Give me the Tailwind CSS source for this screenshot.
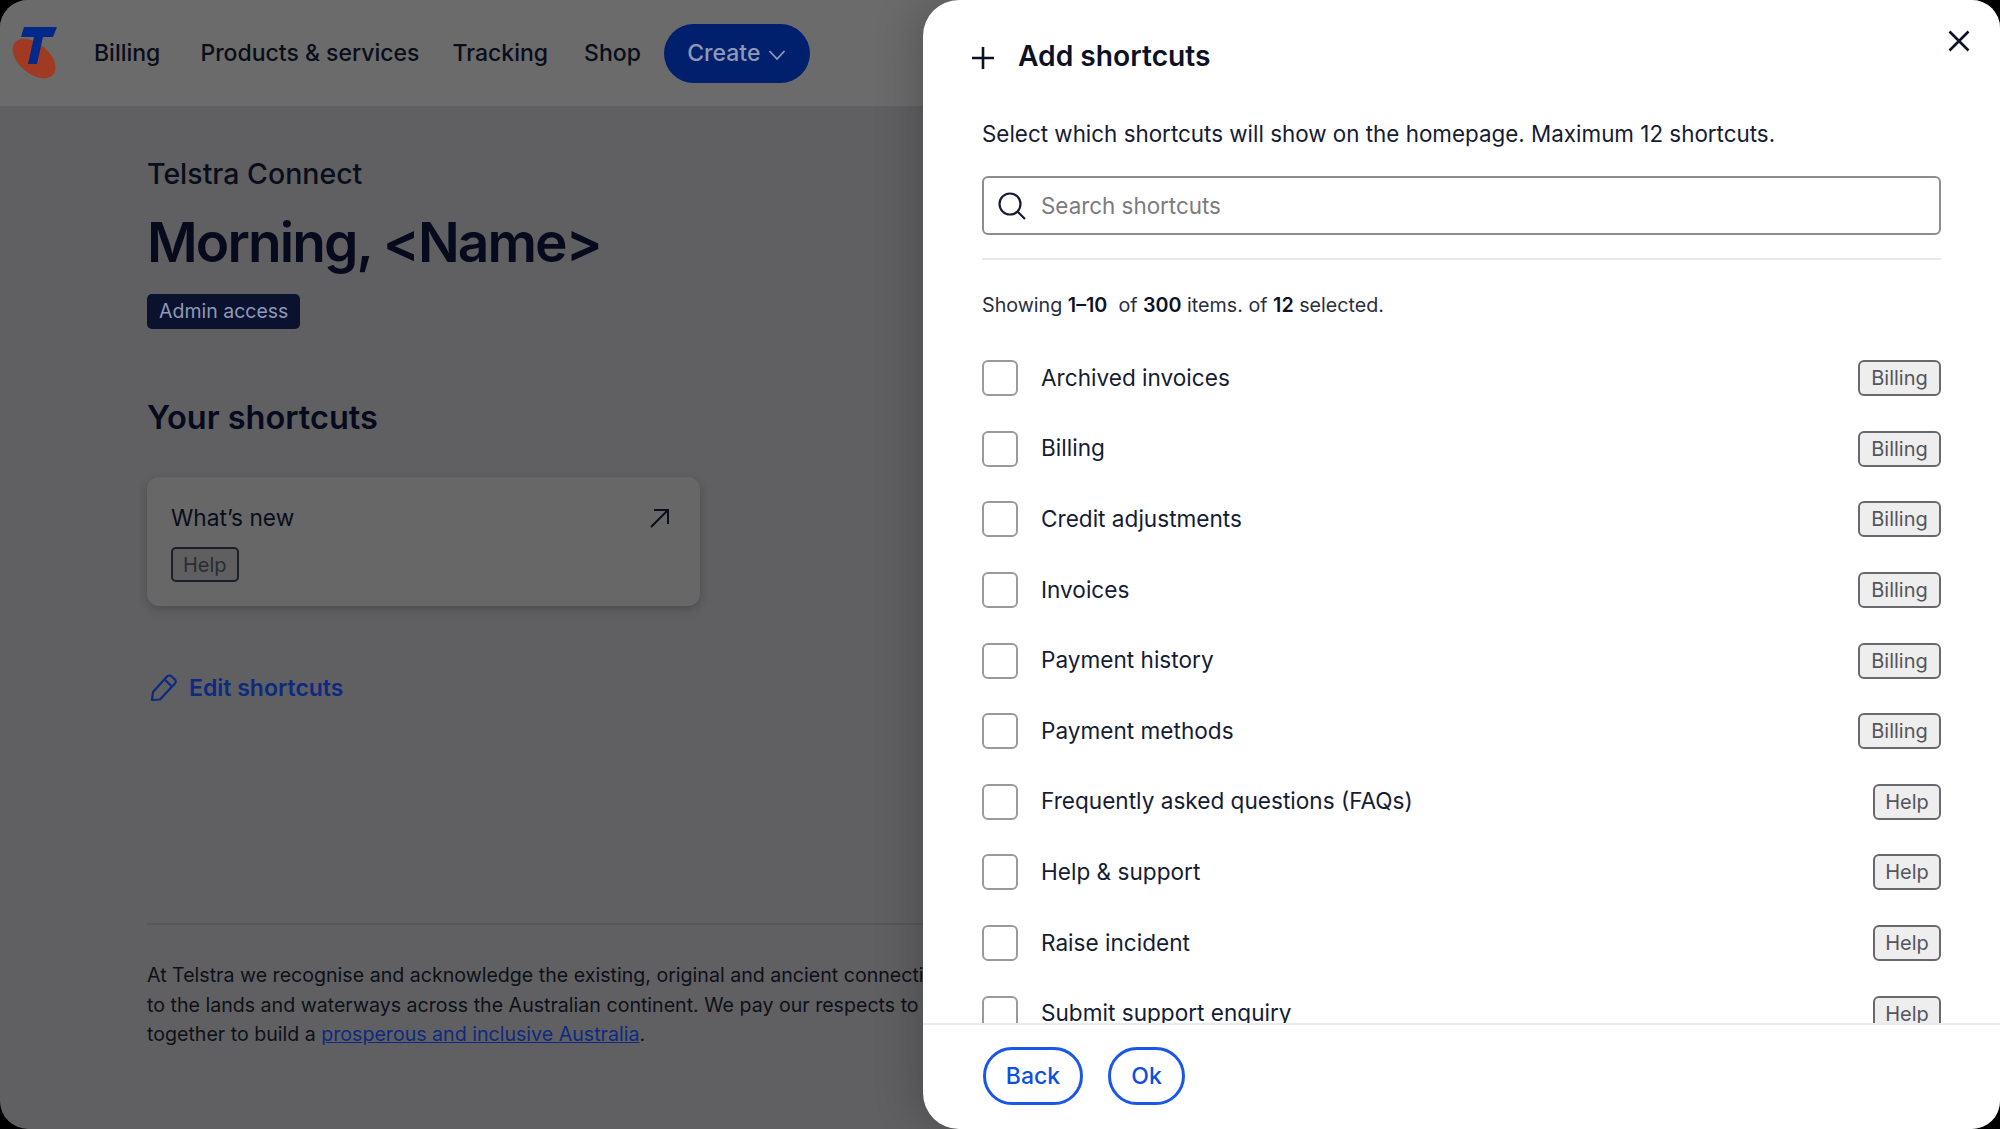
<!DOCTYPE html>
<html lang="en">
<head>
  <meta charset="UTF-8" />
  <title>Telstra Connect</title>
  <script src="https://cdn.jsdelivr.net/npm/@tailwindcss/browser@4"></script>
</head>
<body class="bg-black font-['Inter',sans-serif] text-[#0c1226]">
  <div class="relative w-[2000px] h-[1129px] rounded-[28px] overflow-hidden bg-[#606062]">

    <!-- Nav -->
    <header class="h-[106px] bg-[#6b6b6b] flex items-center pl-[12px]">
      <svg class="w-[46px] h-[54px] shrink-0" viewBox="12 26 46 54">
        <ellipse cx="34" cy="58.500" rx="25" ry="15" transform="rotate(40 34 58.500)" fill="#a03a22" />
        <polygon points="24,27 57,27 53,37 43,37 37,64 28,64 34,37 21,37" fill="#00298a" />
      </svg>
      <nav class="flex items-center ml-[36px] text-[23px] font-medium text-[#0a0d1a]">
        <a class="mr-[40px]">Billing</a>
        <a class="mr-[33px]">Products &amp; services</a>
        <a class="mr-[36px]">Tracking</a>
        <a class="mr-[23px]">Shop</a>
        <a class="w-[146px] h-[59px] rounded-full bg-[#00206e] text-[#8f99b5] flex items-center justify-center gap-[8px]">
          Create
          <svg class="w-[18px] h-[18px] mt-[3px]" viewBox="0 0 18 18" fill="none" stroke="#8f99b5" stroke-width="1.8"><path d="M1.500 5l7.500 8 7.500-8" /></svg>
        </a>
      </nav>
    </header>

    <!-- Page -->
    <main class="pl-[147px]">
      <p class="mt-[50px] text-[28.500px] leading-[36px] font-medium text-[#0a0d1a]">Telstra Connect</p>
      <h1 class="mt-[15px] text-[55px] leading-[70px] font-semibold tracking-[-1.900px] text-[#060a1c]">Morning, &lt;Name&gt;</h1>
      <span class="mt-[17px] inline-flex items-center h-[35px] px-[12px] rounded-[5px] bg-[#0a1230] text-[19.500px] text-[#8f99b5]">Admin access</span>

      <h2 class="mt-[67px] text-[32.500px] leading-[44px] font-semibold text-[#060a1c]">Your shortcuts</h2>

      <div class="mt-[37px] w-[553px] h-[129px] rounded-[12px] bg-[#676767] shadow-[0_3px_10px_rgba(0,0,0,0.22)] px-[24px] pt-[24px]">
        <div class="flex items-center justify-between pr-[6px]">
          <span class="text-[22.700px] leading-[34px] text-[#0a0d1a]">What’s new</span>
          <svg class="w-[22px] h-[22px]" viewBox="0 0 22 22" fill="none" stroke="#0a0d1a" stroke-width="2"><path d="M3 20L20 3M6 3h14v14" /></svg>
        </div>
        <span class="mt-[12px] inline-flex items-center h-[35px] px-[10px] rounded-[5px] border-2 border-[#1c1f2a] bg-[#5f5f5f] text-[20px] text-[#2a2c33]">Help</span>
      </div>

      <a class="mt-[64px] flex items-center gap-[10px] h-[36px] text-[23px] font-semibold text-[#0d2a80]">
        <svg class="w-[30px] h-[30px] ml-[2px]" viewBox="0 0 30 30" fill="none" stroke="#0d2a80" stroke-width="2.200" stroke-linejoin="round"><path d="M3 27l1-8L18 3.500a3 3 0 0 1 4.300-.2l3.400 3a3 3 0 0 1 .2 4.300L11 26.500zM15.500 6.500l8 7.500" /></svg>
        Edit shortcuts
      </a>

      <div class="mt-[217px] border-t-2 border-[#575759]"></div>
      <p class="mt-[36px] whitespace-nowrap text-[19.600px] leading-[29.500px] text-[#0e1018]">
        At Telstra we recognise and acknowledge the existing, original and ancient connections of First Nations peoples<br />
        to the lands and waterways across the Australian continent. We pay our respects to Elders past and present<br />
        together to build a <a class="text-[#0d2a80] underline">prosperous and inclusive Australia</a>.
      </p>
    </main>

    <!-- Add shortcuts panel -->
    <aside class="absolute inset-y-0 right-0 w-[1077px] flex flex-col bg-white rounded-l-[36px] shadow-[-10px_0_40px_rgba(0,0,0,0.18)]">
      <button class="absolute top-[30px] right-[30px]">
        <svg class="w-[22px] h-[22px]" viewBox="0 0 22 22" fill="none" stroke="#0c1226" stroke-width="2.600"><path d="M1.500 1.500l19 19M20.500 1.500l-19 19" /></svg>
      </button>

      <div class="px-[59px] shrink-0">
        <div class="flex items-center h-[112px] -ml-[10px]">
          <svg class="w-[22px] h-[22px] mt-[4px]" viewBox="0 0 22 22" fill="none" stroke="#0c1226" stroke-width="2.600"><path d="M11 0v22M0 11h22" /></svg>
          <h2 class="ml-[24px] text-[28.200px] font-semibold text-[#0c1226]">Add shortcuts</h2>
        </div>
        <p class="mt-[5px] text-[22.400px] leading-[34px] text-[#161c33]">Select which shortcuts will show on the homepage. Maximum 12 shortcuts.</p>
        <div class="mt-[25px] h-[59px] flex items-center rounded-[6px] border-2 border-[#8c8c92] pl-[14px]">
          <svg class="w-[28px] h-[28px]" viewBox="0 0 28 28" fill="none" stroke="#161c33" stroke-width="2.200"><circle cx="12" cy="12" r="10.500" /><path d="M19.500 19.500L27 27" /></svg>
          <span class="ml-[15px] text-[22.400px] text-[#7b7b80]">Search shortcuts</span>
        </div>
        <div class="mt-[23px] border-t-2 border-[#e8e8e8]"></div>
        <p class="mt-[30px] h-[30px] leading-[30px] text-[19.700px] text-[#2a2e3f]">Showing <b class="font-semibold text-[#0c1226]">1–10</b>&nbsp; of <b class="font-semibold text-[#0c1226]">300</b> items. of <b class="font-semibold text-[#0c1226]">12</b> selected.</p>
      </div>

      <!-- List -->
      <ul class="mt-[23px] px-[59px] flex-1 overflow-hidden text-[22.600px] text-[#161c33]">
        <li class="flex items-center h-[70.600px]"><span class="w-[36px] h-[36px] rounded-[6px] border-2 border-[#9a9a9e]"></span><span class="ml-[23px] flex-1 -mt-[1px]">Archived invoices</span><span class="h-[36px] w-[83px] flex items-center justify-center rounded-[6px] border-2 border-[#68686e] bg-[#eeeeee] text-[20px] text-[#55555c]">Billing</span></li>
        <li class="flex items-center h-[70.600px]"><span class="w-[36px] h-[36px] rounded-[6px] border-2 border-[#9a9a9e]"></span><span class="ml-[23px] flex-1 -mt-[1px]">Billing</span><span class="h-[36px] w-[83px] flex items-center justify-center rounded-[6px] border-2 border-[#68686e] bg-[#eeeeee] text-[20px] text-[#55555c]">Billing</span></li>
        <li class="flex items-center h-[70.600px]"><span class="w-[36px] h-[36px] rounded-[6px] border-2 border-[#9a9a9e]"></span><span class="ml-[23px] flex-1 -mt-[1px]">Credit adjustments</span><span class="h-[36px] w-[83px] flex items-center justify-center rounded-[6px] border-2 border-[#68686e] bg-[#eeeeee] text-[20px] text-[#55555c]">Billing</span></li>
        <li class="flex items-center h-[70.600px]"><span class="w-[36px] h-[36px] rounded-[6px] border-2 border-[#9a9a9e]"></span><span class="ml-[23px] flex-1 -mt-[1px]">Invoices</span><span class="h-[36px] w-[83px] flex items-center justify-center rounded-[6px] border-2 border-[#68686e] bg-[#eeeeee] text-[20px] text-[#55555c]">Billing</span></li>
        <li class="flex items-center h-[70.600px]"><span class="w-[36px] h-[36px] rounded-[6px] border-2 border-[#9a9a9e]"></span><span class="ml-[23px] flex-1 -mt-[1px]">Payment history</span><span class="h-[36px] w-[83px] flex items-center justify-center rounded-[6px] border-2 border-[#68686e] bg-[#eeeeee] text-[20px] text-[#55555c]">Billing</span></li>
        <li class="flex items-center h-[70.600px]"><span class="w-[36px] h-[36px] rounded-[6px] border-2 border-[#9a9a9e]"></span><span class="ml-[23px] flex-1 -mt-[1px]">Payment methods</span><span class="h-[36px] w-[83px] flex items-center justify-center rounded-[6px] border-2 border-[#68686e] bg-[#eeeeee] text-[20px] text-[#55555c]">Billing</span></li>
        <li class="flex items-center h-[70.600px]"><span class="w-[36px] h-[36px] rounded-[6px] border-2 border-[#9a9a9e]"></span><span class="ml-[23px] flex-1 -mt-[1px]">Frequently asked questions (FAQs)</span><span class="h-[36px] w-[68px] flex items-center justify-center rounded-[6px] border-2 border-[#68686e] bg-[#eeeeee] text-[20px] text-[#55555c]">Help</span></li>
        <li class="flex items-center h-[70.600px]"><span class="w-[36px] h-[36px] rounded-[6px] border-2 border-[#9a9a9e]"></span><span class="ml-[23px] flex-1 -mt-[1px]">Help &amp; support</span><span class="h-[36px] w-[68px] flex items-center justify-center rounded-[6px] border-2 border-[#68686e] bg-[#eeeeee] text-[20px] text-[#55555c]">Help</span></li>
        <li class="flex items-center h-[70.600px]"><span class="w-[36px] h-[36px] rounded-[6px] border-2 border-[#9a9a9e]"></span><span class="ml-[23px] flex-1 -mt-[1px]">Raise incident</span><span class="h-[36px] w-[68px] flex items-center justify-center rounded-[6px] border-2 border-[#68686e] bg-[#eeeeee] text-[20px] text-[#55555c]">Help</span></li>
        <li class="flex items-center h-[70.600px]"><span class="w-[36px] h-[36px] rounded-[6px] border-2 border-[#9a9a9e]"></span><span class="ml-[23px] flex-1 -mt-[1px]">Submit support enquiry</span><span class="h-[36px] w-[68px] flex items-center justify-center rounded-[6px] border-2 border-[#68686e] bg-[#eeeeee] text-[20px] text-[#55555c]">Help</span></li>
      </ul>

      <!-- Footer -->
      <footer class="h-[106px] shrink-0 border-t-2 border-[#ebebeb] flex items-center gap-[25px] pl-[60px] pb-[2px]">
        <button class="w-[100px] h-[58px] rounded-full border-[3px] border-[#1a56e8] text-[23px] font-medium text-[#0d4fe0]">Back</button>
        <button class="w-[77px] h-[58px] rounded-full border-[3px] border-[#1a56e8] text-[23px] font-medium text-[#0d4fe0]">Ok</button>
      </footer>
    </aside>
  </div>
</body>
</html>
